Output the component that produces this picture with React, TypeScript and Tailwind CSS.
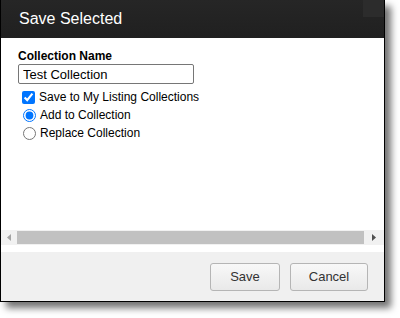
import React from 'react';

export default function App() {
  return (
    <div className="w-[400px] h-[318px] bg-white" style={{ fontFamily: '"Liberation Sans", Arial, sans-serif' }}>
      <div className="w-[385px] h-[302px] flex flex-col border-x border-b border-black bg-white shadow-[6px_6px_7px_rgba(0,0,0,0.55)]">
        {/* header */}
        <div className="h-[38px] shrink-0 flex items-start justify-between bg-gradient-to-b from-[#262626] to-[#202020]">
          <div className="pl-[18px] pt-[9px] text-[16px] text-white leading-[20px]">Save Selected</div>
          <div className="w-[21px] h-[17px] bg-[#2c2c2c]" />
        </div>

        {/* body */}
        <div className="flex-1 pl-[17px] pt-[11px] text-[12px] text-black">
          <div className="font-bold leading-[14px]">Collection Name</div>
          <input
            type="text"
            defaultValue="Test Collection"
            className="mt-[1px] w-[176px] h-[20px] border border-[#767676] rounded-[2px] px-[4px] text-[13px] text-black outline-none"
          />
          <div className="flex flex-col mt-[4px] pl-[4px]">
            <label className="flex items-center gap-[4px] h-[18px]">
              <input type="checkbox" defaultChecked className="m-0 w-[13px] h-[13px] accent-[#0075ff]" />
              <span>Save to My Listing Collections</span>
            </label>
            <label className="flex items-center gap-[4px] h-[18px]">
              <input type="radio" name="mode" defaultChecked className="m-0 ml-[1px] w-[13px] h-[13px] accent-[#0075ff]" />
              <span>Add to Collection</span>
            </label>
            <label className="flex items-center gap-[4px] h-[18px]">
              <input type="radio" name="mode" className="m-0 ml-[1px] w-[13px] h-[13px] accent-[#0075ff]" />
              <span>Replace Collection</span>
            </label>
          </div>
        </div>

        {/* horizontal scrollbar */}
        <div className="h-[15px] shrink-0 flex items-center bg-[#f1f1f1]">
          <div className="w-[16px] flex justify-center">
            <svg width="4" height="7" viewBox="0 0 4 7"><path d="M4 0 L0 3.5 L4 7 Z" fill="#a3a3a3" /></svg>
          </div>
          <div className="flex-1 h-[13px] bg-[#c1c1c1]" />
          <div className="w-[20px] flex justify-center">
            <svg width="4" height="7" viewBox="0 0 4 7"><path d="M0 0 L4 3.5 L0 7 Z" fill="#505050" /></svg>
          </div>
        </div>

        <div className="h-[7px] shrink-0 bg-white" />

        {/* footer */}
        <div className="h-[49px] shrink-0 flex items-center justify-end gap-[10px] pr-[16px] bg-[#f0f0f0]">
          <button className="w-[70px] h-[28px] rounded-[3px] border border-[#b5b5b5] bg-gradient-to-b from-[#f8f8f8] to-[#e9e9e9] text-[13px] text-[#333]">
            Save
          </button>
          <button className="w-[78px] h-[28px] rounded-[3px] border border-[#b5b5b5] bg-gradient-to-b from-[#f8f8f8] to-[#e9e9e9] text-[13px] text-[#333]">
            Cancel
          </button>
        </div>
      </div>
    </div>
  );
}
